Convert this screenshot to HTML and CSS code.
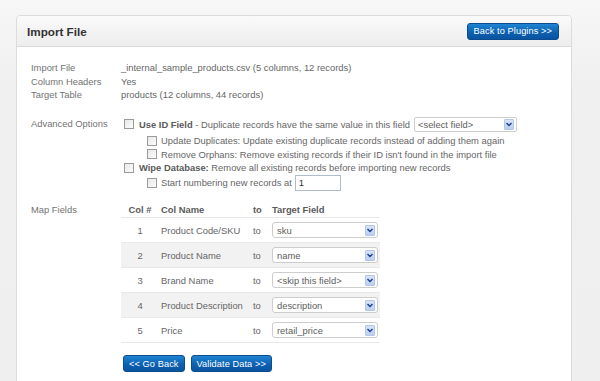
FILE: index.html
```html
<!DOCTYPE html>
<html>
<head>
<meta charset="utf-8">
<link rel="stylesheet" href="styles.css">
</head>
<body>
<div class="panel">
  <div class="panel-head">
    <h1 class="title">Import File</h1>
    <a class="btn">Back to Plugins &gt;&gt;</a>
  </div>
  <div class="panel-body">
    <div class="info">
      <div class="lbl">Import File</div><div class="val">_internal_sample_products.csv (5 columns, 12 records)</div>
      <div class="lbl">Column Headers</div><div class="val">Yes</div>
      <div class="lbl">Target Table</div><div class="val">products (12 columns, 44 records)</div>
    </div>

    <div class="adv">
      <div class="lbl lbl-adv">Advanced Options</div>
      <div class="adv-opts">
        <div class="line line1">
          <span class="cb"></span><b>Use ID Field</b>&nbsp;- Duplicate records have the same value in this field
          <span class="sel sel-adv"><span class="sel-text">&lt;select field&gt;</span><span class="arrow"><svg width="6" height="5" viewBox="0 0 6 5"><path d="M0.5 1 L3 3.6 L5.5 1" fill="none" stroke="#1d3f8f" stroke-width="1.4"/></svg></span></span>
        </div>
        <div class="line sub sub1"><span class="cb"></span>Update Duplicates: Update existing duplicate records instead of adding them again</div>
        <div class="line sub"><span class="cb"></span>Remove Orphans: Remove existing records if their ID isn't found in the import file</div>
        <div class="line"><span class="cb"></span><b>Wipe Database:</b>&nbsp;Remove all existing records before importing new records</div>
        <div class="line sub line5"><span class="cb"></span>Start numbering new records at <span class="num">1</span></div>
      </div>
    </div>

    <div class="map">
      <div class="lbl">Map Fields</div>
      <div class="map-right">
        <table class="fields">
          <thead>
            <tr><th class="c-num">Col #</th><th class="c-name">Col Name</th><th class="c-to">to</th><th class="c-target">Target Field</th></tr>
          </thead>
          <tbody>
            <tr><td class="c-num">1</td><td class="c-name">Product Code/SKU</td><td class="c-to">to</td><td class="c-target"><span class="sel"><span class="sel-text">sku</span><span class="arrow"><svg width="6" height="5" viewBox="0 0 6 5"><path d="M0.5 1 L3 3.6 L5.5 1" fill="none" stroke="#1d3f8f" stroke-width="1.4"/></svg></span></span></td></tr>
            <tr class="alt"><td class="c-num">2</td><td class="c-name">Product Name</td><td class="c-to">to</td><td class="c-target"><span class="sel"><span class="sel-text">name</span><span class="arrow"><svg width="6" height="5" viewBox="0 0 6 5"><path d="M0.5 1 L3 3.6 L5.5 1" fill="none" stroke="#1d3f8f" stroke-width="1.4"/></svg></span></span></td></tr>
            <tr><td class="c-num">3</td><td class="c-name">Brand Name</td><td class="c-to">to</td><td class="c-target"><span class="sel"><span class="sel-text">&lt;skip this field&gt;</span><span class="arrow"><svg width="6" height="5" viewBox="0 0 6 5"><path d="M0.5 1 L3 3.6 L5.5 1" fill="none" stroke="#1d3f8f" stroke-width="1.4"/></svg></span></span></td></tr>
            <tr class="alt"><td class="c-num">4</td><td class="c-name">Product Description</td><td class="c-to">to</td><td class="c-target"><span class="sel"><span class="sel-text">description</span><span class="arrow"><svg width="6" height="5" viewBox="0 0 6 5"><path d="M0.5 1 L3 3.6 L5.5 1" fill="none" stroke="#1d3f8f" stroke-width="1.4"/></svg></span></span></td></tr>
            <tr><td class="c-num">5</td><td class="c-name">Price</td><td class="c-to">to</td><td class="c-target"><span class="sel"><span class="sel-text">retail_price</span><span class="arrow"><svg width="6" height="5" viewBox="0 0 6 5"><path d="M0.5 1 L3 3.6 L5.5 1" fill="none" stroke="#1d3f8f" stroke-width="1.4"/></svg></span></span></td></tr>
          </tbody>
        </table>
        <div class="actions">
          <a class="btn">&lt;&lt; Go Back</a>
          <a class="btn">Validate Data &gt;&gt;</a>
        </div>
      </div>
    </div>
  </div>
</div>
</body>
</html>
```

FILE: styles.css
```css
* { box-sizing: border-box; }
html, body { margin: 0; padding: 0; }
body {
  width: 600px;
  height: 381px;
  overflow: hidden;
  background: linear-gradient(#f7f7f7, #f0f0f0 80px, #efefef);
  font-family: "Liberation Sans", Arial, sans-serif;
  font-size: 9.4px;
  color: #666;
  padding: 15px 0 0 16px;
}
.panel {
  width: 556px;
  height: 380px;
  background: #fff;
  border: 1px solid #dcdcdc;
  border-radius: 4px 4px 0 0;
}
.panel-head {
  height: 31px;
  display: flex;
  align-items: center;
  justify-content: space-between;
  padding: 0 12px 0 10px;
  background: linear-gradient(#fafafa, #ededed);
  border-bottom: 1px solid #dadada;
  border-radius: 4px 4px 0 0;
}
.title {
  margin: 0;
  font-size: 11.7px;
  font-weight: bold;
  color: #333;
}
.btn {
  display: inline-flex;
  align-items: center;
  height: 17px;
  padding: 0 6px;
  border: 1px solid #0b4c8c;
  border-radius: 3px;
  background: linear-gradient(#1f84d2, #0d62b0 55%, #0a52a0);
  color: #fff;
  font-size: 9.2px;
  letter-spacing: 0.1px;
  text-decoration: none;
}
.panel-body {
  padding: 14px 0 0 14px;
}
.info {
  display: grid;
  grid-template-columns: 90px 1fr;
  line-height: 13.5px;
}
.lbl { color: #737373; }
.adv {
  display: grid;
  grid-template-columns: 90px 1fr;
  margin-top: 13.5px;
}
.lbl-adv { line-height: 18px; }
.line {
  display: flex;
  align-items: center;
  height: 13.5px;
  white-space: nowrap;
  padding-left: 3px;
}
.line1 { height: 18px; }
.sub { padding-left: 26px; }
.sub1 { margin-top: 1px; }
.line5 { height: 16px; }
.cb {
  display: inline-block;
  width: 10px;
  height: 10px;
  border: 1px solid #9a9b9c;
  background: linear-gradient(135deg, #e8e8e8, #fcfcfc);
  margin-right: 5px;
  flex: none;
}
.sub .cb { margin-right: 4px; }
.line b { color: #5a5a5a; }
.sel {
  display: inline-flex;
  align-items: center;
  justify-content: space-between;
  width: 106px;
  height: 16px;
  border: 1px solid #cdcdcd;
  border-radius: 3px;
  background: #fff;
  padding: 0 2px 0 4px;
  color: #5e5e5e;
}
.sel-adv {
  width: 103px;
  height: 15px;
  margin-left: 4px;
  padding-left: 3px;
  border-radius: 2px;
}
.arrow {
  display: inline-flex;
  align-items: center;
  justify-content: center;
  width: 10px;
  height: 11px;
  background: linear-gradient(#d8e3f8, #bccff0);
  border: 1px solid #b3c6e8;
  border-radius: 1px;
}
.num {
  display: inline-flex;
  align-items: center;
  width: 46px;
  height: 16px;
  margin-left: 3px;
  border: 1px solid #aebccb;
  padding-left: 3px;
  color: #333;
}
.map {
  display: grid;
  grid-template-columns: 90px 1fr;
  margin-top: 12.5px;
}
.map .lbl { line-height: 14px; }
.fields {
  border-collapse: collapse;
  width: 259px;
}
.fields th {
  height: 14px;
  padding: 0;
  font-weight: bold;
  color: #5a5a5a;
  text-align: left;
  line-height: 14px;
}
.fields td {
  height: 25px;
  padding: 0;
  border-top: 1px solid #e8e8e8;
  border-bottom: 1px solid #e8e8e8;
}
.fields tr.alt td { background: #f2f2f2; }
.c-num { width: 38px; text-align: center !important; }
.c-name { width: 90px; padding-left: 2px !important; }
.c-to { width: 19px; padding-left: 4px !important; }
.c-target { width: 112px; padding-left: 4px !important; }
.actions {
  display: flex;
  gap: 6px;
  margin-top: 12px;
  padding-left: 2px;
}
.actions .btn { height: 17px; padding: 0 5px; }
```
